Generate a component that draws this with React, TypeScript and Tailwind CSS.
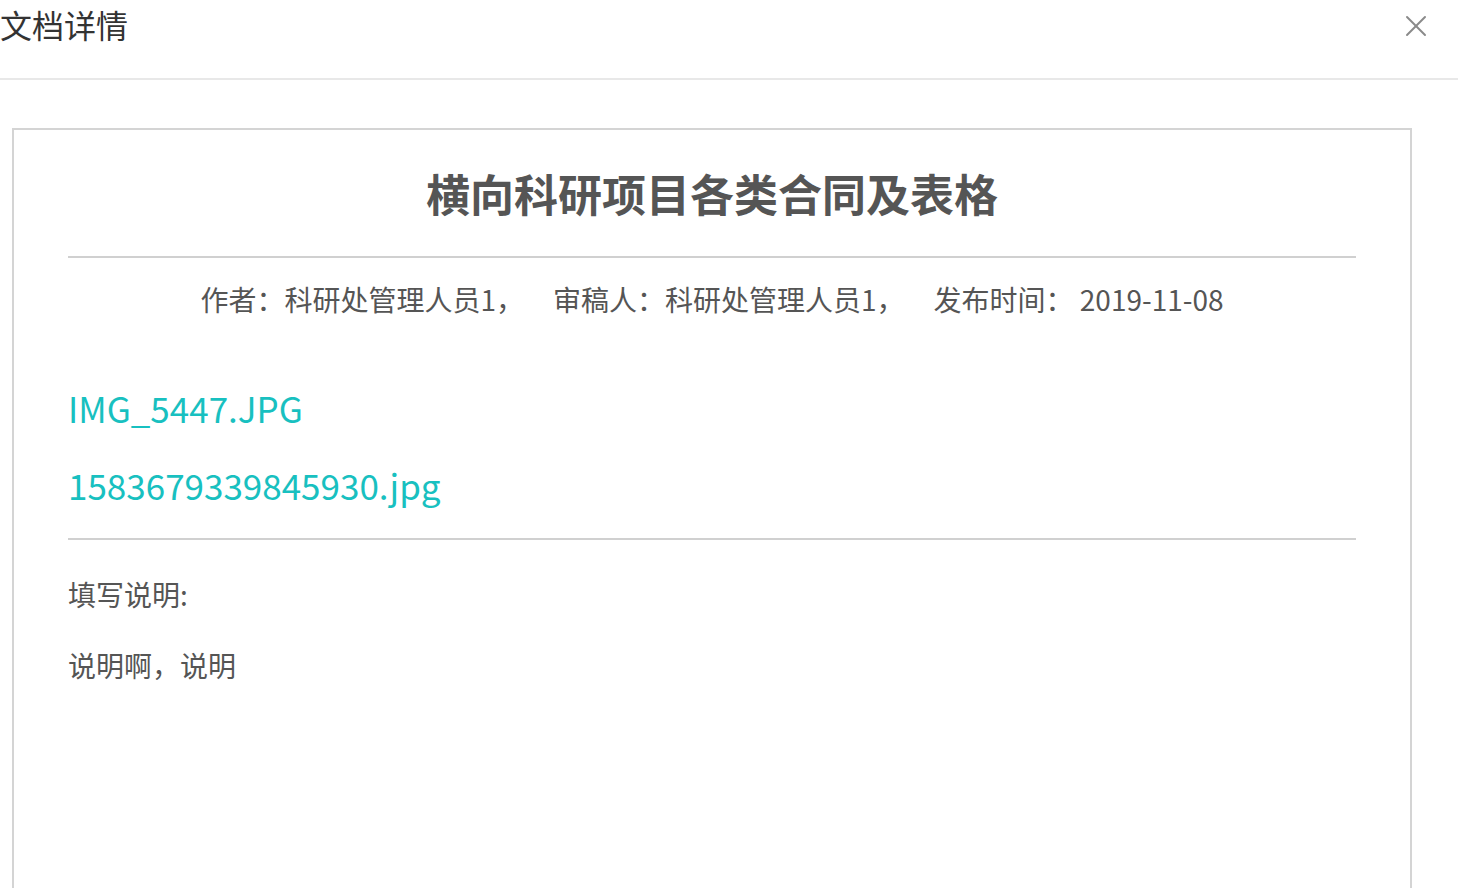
import { X } from 'lucide-react';

const files = ['IMG_5447.JPG', '1583679339845930.jpg'];

export default function App() {
  return (
    <div className="h-screen overflow-hidden flex flex-col bg-white font-['Noto_Sans_CJK_SC','Noto_Sans',sans-serif] text-[#333]">
      {/* Modal header */}
      <header className="h-[80px] shrink-0 border-b-2 border-[#e8e8e8] flex items-start justify-between">
        <h2 className="text-[32px] leading-[50px] text-[#333] -mt-[1px]">文档详情</h2>
        <button className="mt-[8px] mr-[24px] text-[#8a8a8a]">
          <X size={36} strokeWidth={1.3} />
        </button>
      </header>

      {/* Document body */}
      <div className="flex-1 flex flex-col pt-[48px] pl-[12px] pr-[46px]">
        <div className="flex-1 border-2 border-b-0 border-[#d4d4d4] px-[54px]">
          <h1 className="text-center text-[44px] font-bold text-[#555] leading-[60px] pt-[33px] pb-[33px] border-b-2 border-[#d0d0d0]">
            横向科研项目各类合同及表格
          </h1>

          <div className="flex justify-center gap-[29px] pt-[23px] text-[28px] leading-[36px] text-[#555]">
            <span>作者：科研处管理人员1，</span>
            <span>审稿人：科研处管理人员1，</span>
            <span>发布时间： 2019-11-08</span>
          </div>

          <div className="pt-[67px] pb-[29px] border-b-2 border-[#d0d0d0] flex flex-col gap-[29px]">
            {files.map((f) => (
              <a key={f} className="text-[35px] leading-[48px] text-[#18c0c0]">
                {f}
              </a>
            ))}
          </div>

          <div className="pt-[36px] text-[28px] leading-[36px] text-[#555] flex flex-col gap-[35px]">
            <p>填写说明:</p>
            <p>说明啊，说明</p>
          </div>
        </div>
      </div>
    </div>
  );
}
